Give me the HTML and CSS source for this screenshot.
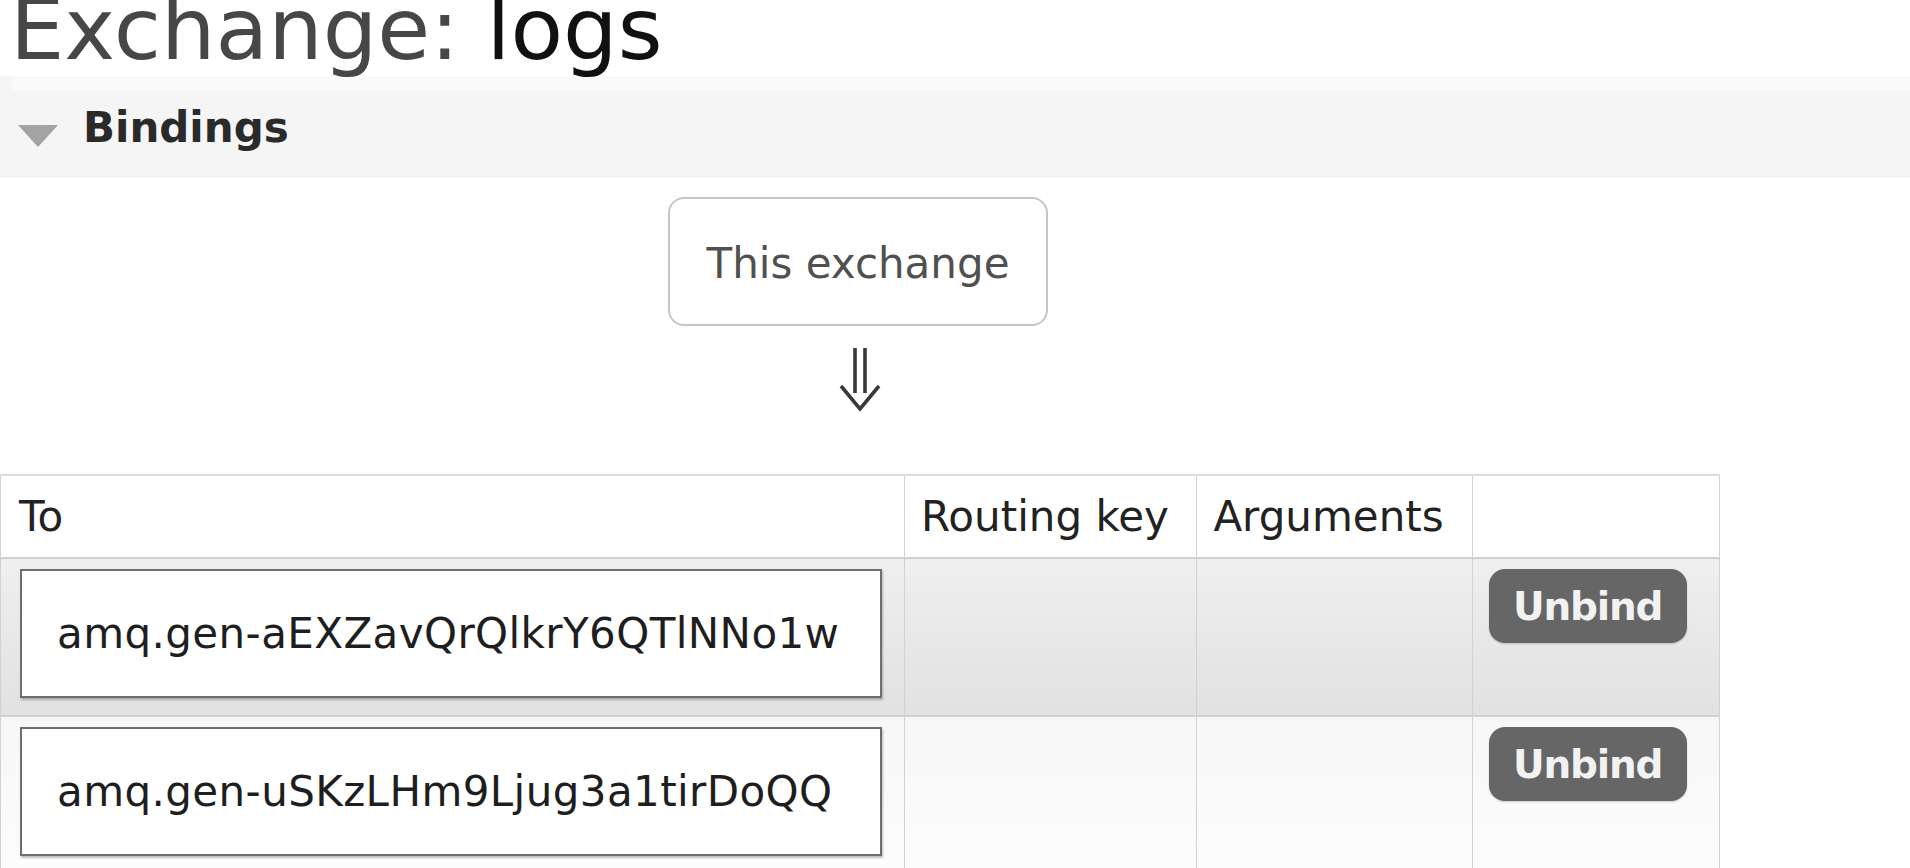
FILE: index.html
```html
<!DOCTYPE html>
<html>
<head>
<meta charset="utf-8">
<link rel="stylesheet" href="styles.css">
</head>
<body>
<h1 class="title">Exchange: <b class="name">logs</b></h1>
<div class="section">
  <div class="section-strip"></div>
  <div class="section-head">
    <span class="caret"></span>
    <span class="section-title">Bindings</span>
  </div>
</div>
<div class="bindings">
  <div class="diagram">
    <div class="this-box">This exchange</div>
    <svg class="arrow" width="46" height="64" viewBox="0 0 46 64">
      <path d="M18 0 V45 M28 0 V45" stroke="#3a3a3a" stroke-width="3.6" fill="none"/>
      <path d="M4 38 L23 61 L42 38" stroke="#3a3a3a" stroke-width="3.6" fill="none" stroke-linejoin="miter"/>
    </svg>
  </div>
  <table class="list">
    <thead>
      <tr>
        <th class="c-to">To</th>
        <th class="c-rk">Routing key</th>
        <th class="c-args">Arguments</th>
        <th class="c-act"></th>
      </tr>
    </thead>
    <tbody>
      <tr class="alt1">
        <td><span class="queue">amq.gen-aEXZavQrQlkrY6QTlNNo1w</span></td>
        <td></td>
        <td></td>
        <td class="act"><span class="btn">Unbind</span></td>
      </tr>
      <tr class="alt2">
        <td><span class="queue">amq.gen-uSKzLHm9Ljug3a1tirDoQQ</span></td>
        <td></td>
        <td></td>
        <td class="act"><span class="btn">Unbind</span></td>
      </tr>
    </tbody>
  </table>
</div>
</body>
</html>
```

FILE: styles.css
```css
html, body {
  margin: 0;
  padding: 0;
  background: #fff;
  overflow: hidden;
}
body {
  font-family: "DejaVu Sans", Verdana, sans-serif;
  color: #262626;
  width: 1910px;
  height: 868px;
}
.title {
  margin: -9px 0 0 0;
  padding-left: 10px;
  font-size: 86px;
  line-height: 76px;
  font-weight: normal;
  color: #474747;
  white-space: nowrap;
}
.title .name {
  font-weight: normal;
  color: #111;
}
.section {
  margin-top: 9px;
  background: #f5f5f5;
  height: 102px;
}
.section-strip {
  height: 14px;
  margin-left: 12px;
  background: #fafafa;
}
.section-head {
  display: flex;
  align-items: flex-start;
  padding-top: 13px;
  padding-left: 18px;
}
.caret {
  width: 0;
  height: 0;
  border-left: 20px solid transparent;
  border-right: 20px solid transparent;
  border-top: 22px solid #a3a3a3;
  margin-top: 22px;
  margin-right: 25px;
}
.section-title {
  font-weight: bold;
  font-size: 42px;
  line-height: 50px;
  color: #2a2a2a;
}
.bindings {
  width: 1720px;
}
.diagram {
  display: flex;
  flex-direction: column;
  align-items: center;
  padding-top: 19px;
}
.this-box {
  box-sizing: border-box;
  height: 129px;
  width: 380px;
  border: 2px solid #c6c6c6;
  border-radius: 16px;
  padding-top: 4px;
  line-height: 121px;
  font-size: 42px;
  text-align: center;
  color: #505050;
  margin-right: 4px;
}
.arrow {
  display: block;
  margin-top: 22px;
}
.list {
  margin-top: 62px;
  border-collapse: collapse;
  width: 1720px;
  table-layout: fixed;
  font-size: 42px;
}
.list th, .list td {
  border: 1px solid #d2d2d2;
  text-align: left;
}
.list th {
  font-weight: normal;
  height: 81px;
  padding: 0 0 0 16px;
  background: #fff;
  color: #222;
  white-space: nowrap;
  line-height: 50px;
}
.list thead tr {
  border-top: 2px solid #dcdcdc;
}
.list th.c-to { width: 884px; padding-left: 18px; }
.list th.c-rk { width: 275px; }
.list th.c-args { width: 258px; }
.list th.c-act { width: 230px; }
.list tbody tr {
  border-top: 2px solid #d0d0d0;
}
.list td {
  vertical-align: top;
  height: 134px;
  padding: 10px 18px 12px 18px;
}
.list td.act {
  padding-left: 16px;
}
.list tr.alt1 td {
  background: linear-gradient(to bottom, #efefef, #e1e1e1);
}
.list tr.alt2 td {
  background: linear-gradient(to bottom, #f7f7f7, #fcfcfc);
}
.queue {
  display: block;
  box-sizing: border-box;
  width: 862px;
  height: 129px;
  border: 2px solid #6e6e6e;
  box-shadow: 1px 2px 2px rgba(0,0,0,0.25);
  background: #fff;
  padding-left: 35px;
  line-height: 125px;
  font-size: 42px;
  letter-spacing: 0.4px;
  color: #1e1e1e;
  white-space: nowrap;
  margin-left: 1px;
}
.btn {
  display: flex;
  align-items: center;
  justify-content: center;
  width: 198px;
  height: 74px;
  border-radius: 16px;
  background: #666;
  color: #f2f2f2;
  font-weight: bold;
  font-size: 39px;
  letter-spacing: -1.2px;
  box-shadow: 0 1px 2px rgba(0,0,0,0.2);
}
```
